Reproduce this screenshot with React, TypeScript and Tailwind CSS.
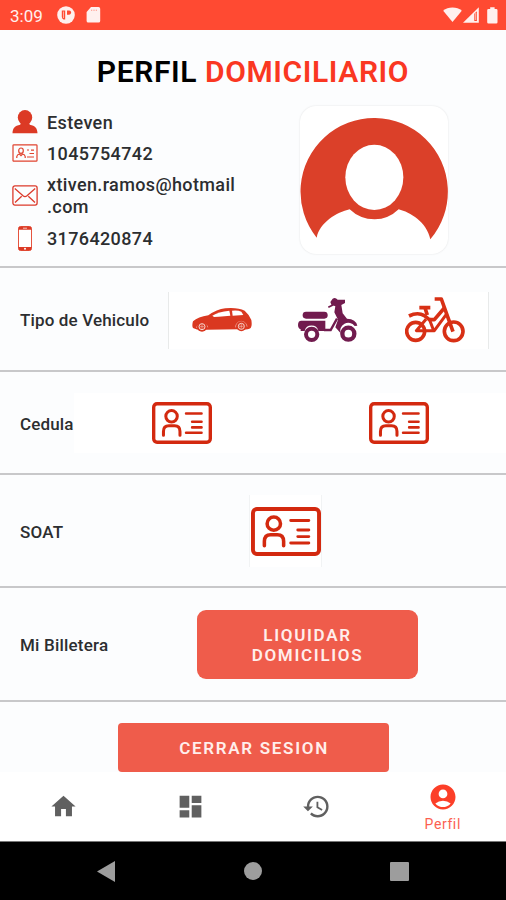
import type { ReactNode } from 'react';
import { MdAccountCircle, MdDashboard, MdHistory, MdHome } from 'react-icons/md';

const StatusBar = () => (
    <header className="h-[30px] shrink-0 bg-[#ff4a32] flex items-center pl-[10px] pr-[8px] text-[#fff0ee]">
        <span className="w-[47px] text-[17px] leading-[30px] pt-[1px]">3:09</span>
        <svg width="18" height="18" viewBox="0 0 18 18" fill="currentColor">
            <circle cx="9" cy="9" r="8.8" />
            <path d="M8.2 4.5v9H6.6q-1.8-.8-1.8-2.8V4.5z" fill="#ff4a32" />
            <path d="M10 4.5h2.2q1.9.2 1.9 2.1T12.2 8.800H10z" fill="#ff4a32" />
            <path d="M6.500 5.500v6.500" stroke="currentColor" strokeWidth="0.600" />
        </svg>
        <svg className="ml-[11px]" width="15" height="16" viewBox="0 0 15 16" fill="currentColor">
            <path d="M5 0h7.500q1.700 0 1.700 1.700v12.200q0 1.700-1.700 1.700H2.200q-1.600 0-1.600-1.700V5z" />
            <path d="M5.700 2.600v1.400M8 2.600v1.400M10.300 2.600v1.400" stroke="#ff4a32" strokeWidth="1" opacity="0.500" />
        </svg>
        <svg className="ml-auto" width="19" height="16" viewBox="0 0 19 16" fill="currentColor">
            <path d="M.2 3.700Q4 .4 9.500.4t9.300 3.300L9.500 15z" />
        </svg>
        <svg className="ml-[1px]" width="16" height="16" viewBox="0 0 16 16" fill="currentColor">
            <path d="M0 15.800 15.800.2v15.600z" />
            <path d="M11.300 6.800v7.200h2.600V4.200z" fill="#ff4a32" />
            <path d="M12.700 6v7" stroke="currentColor" strokeWidth="0.700" />
        </svg>
        <svg className="ml-[8px]" width="11" height="17" viewBox="0 0 11 17" fill="currentColor">
            <path d="M3.200.3h4.400V2h1.600q1.300 0 1.300 1.300v12q0 1.300-1.300 1.300H1.500Q.2 16.600.2 15.300V3.300Q.2 2 1.500 2h1.700z" />
        </svg>
    </header>
);

const UserIcon = () => (
    <svg width="26" height="24" viewBox="0 0 26 24" fill="#dc3a25">
        <ellipse cx="13" cy="7.500" rx="7.200" ry="7.500" />
        <path d="M.5 23.200c.2-5 2.300-7.200 7.700-8.400q0-1.500 2-2.700h5.600q2 1.200 2 2.700c5.400 1.200 7.500 3.400 7.700 8.400z" />
    </svg>
);

const SmallCardIcon = () => (
    <svg width="26" height="18" viewBox="0 0 26 18" fill="none" stroke="#e0432f" strokeWidth="1.200">
        <rect x="1" y="0.800" width="24" height="16.400" rx="0.800" />
        <ellipse cx="9" cy="6.700" rx="2.300" ry="2.700" />
        <path d="M4.800 14v-1.500q.4-2.100 2.600-2.500l1.600 1.700 1.600-1.700q2.300.4 2.600 2.500V14" />
        <path d="M15 6h2M19 6.200h3M17.500 9.500H22M15 13h7" />
    </svg>
);

const MailIcon = () => (
    <svg width="26" height="21" viewBox="0 0 26 21" fill="none" stroke="#dc3a2b" strokeWidth="1.300">
        <rect x="0.900" y="0.900" width="24.200" height="19.200" rx="2" />
        <path d="m2.800 3.600 8.200 7.200q2 1.500 4 0l8.200-7.200M3 17.500l6.700-6.200M23 17.500l-6.700-6.200" />
    </svg>
);

const PhoneIcon = () => (
    <svg width="14" height="25" viewBox="0 0 14 25">
        <rect x="0.500" y="0.500" width="13" height="24" rx="2" fill="#fff" stroke="#e5543f" />
        <path d="M.5 3.700V2.500q0-2 2-2h9q2 0 2 2v1.200zM.5 21v1.500q0 2 2 2h9q2 0 2-2V21z" fill="#dc3a25" />
        <path d="M5 2.200h4" stroke="#fff" strokeWidth="0.700" />
        <circle cx="7" cy="22.700" r="1" fill="#fff" />
    </svg>
);

const Avatar = () => (
    <div className="size-[148px] rounded-[16px] bg-white shadow-[0_0_2px_rgba(0,0,0,0.12)] overflow-hidden">
        <svg width="148" height="148" viewBox="0 0 444 444">
            <path
                d="M50 395A221 221 0 1 1 391 400C380 347 330 319 296 310Q265 340 224 340 180 340 149 310C110 319 60 349 50 395Z"
                fill="#db4029"
            />
            <ellipse cx="223" cy="214" rx="87" ry="98" fill="#fff" />
        </svg>
    </div>
);

const CardIcon = ({ className }: { className: string }) => (
    <svg className={className} viewBox="0 0 178 124" fill="none" stroke="#d3290f" strokeWidth="9" strokeLinecap="round">
        <rect x="5" y="5" width="168" height="114" rx="10" strokeWidth="10" />
        <circle cx="58" cy="42" r="17" />
        <path d="M34 98V87Q34 70 50 70H67Q83 70 83 87V98" />
        <path d="M101 34H147M119 58H147M119 75H147M101 91H147" strokeWidth="7.500" />
    </svg>
);

const CarIcon = () => (
    <svg width="60" height="24" viewBox="0 0 180 72" fill="#da3820">
        <path d="M3 60Q-1 53 3 40Q18 27 49 22Q74 4 100 1Q138-2 158 8Q172 20 178 36Q181 54 176 60Q168 66 138 64L44 65Q18 69 3 60Z" />
        <path d="M61 23Q79 11 112 8L115 23 80 26 66 27Z" fill="#fff" />
        <path d="M120 8Q138 6 148 11L154 21 122 23Z" fill="#fff" />
        <path d="M14 60A17 17 0 0 1 47 58M131 58A17 17 0 0 1 165 56" fill="none" stroke="#f9d6ce" strokeWidth="2" />
        <circle cx="30" cy="56" r="15" />
        <circle cx="148" cy="55" r="15" />
        <g fill="none" stroke="#f9d6ce">
            <circle cx="30" cy="56" r="9" strokeWidth="3" />
            <circle cx="148" cy="55" r="9" strokeWidth="3" />
            <path d="M30 49v14M23 56h14M148 48v14M141 55h14" strokeWidth="1.500" />
        </g>
    </svg>
);

const ScooterIcon = () => (
    <svg width="60" height="44" viewBox="0 0 180 132" fill="#711b4e">
        <rect x="14" y="41" width="75" height="21" rx="10" />
        <path d="M10 68H82V99H61A21 21 0 0 0 20 99H8V94Q0 91 0 81Q0 68 10 68Z" />
        <path d="M78 96H98L117 62" fill="none" stroke="#711b4e" strokeWidth="7" />
        <circle cx="41" cy="109" r="17" fill="none" stroke="#711b4e" strokeWidth="12" />
        <circle cx="151" cy="107" r="18" fill="none" stroke="#711b4e" strokeWidth="13" />
        <path d="M97 12 104 2Q112-3 119 5H141V15L130 21 134 46 147 62Q174 63 178 83L170 84A24 24 0 0 0 128 106L112 88 120 65 109 43 112 25 100 20Z" />
        <path d="M91 28 106 20" stroke="#711b4e" strokeWidth="5" />
    </svg>
);

const BikeIcon = () => (
    <svg width="60" height="46" viewBox="0 0 180 138" fill="none" stroke="#d83015" strokeWidth="11" strokeLinejoin="round">
        <circle cx="32" cy="103" r="27" />
        <circle cx="146" cy="103" r="28" />
        <path d="M89 6H109L144 104" />
        <path d="M43 32H76M60 33 67 54" />
        <path d="M12 57Q38 44 58 56L73 68H88L118 33" />
        <path d="M72 64 85 98M63 67 34 101H88L124 52" strokeWidth="9" />
    </svg>
);

const contactRows: { icon: ReactNode; text: string; className: string }[] = [
    { icon: <UserIcon />, text: 'Esteven', className: 'h-[28px]' },
    { icon: <SmallCardIcon />, text: '1045754742', className: 'h-[34px]' },
    { icon: <MailIcon />, text: 'xtiven.ramos@hotmail .com', className: 'h-[50px]' },
    { icon: <PhoneIcon />, text: '3176420874', className: 'h-[36px]' },
];

const navItems = [
    { Icon: MdHome, label: 'Inicio' },
    { Icon: MdDashboard, label: 'Servicios' },
    { Icon: MdHistory, label: 'Historial' },
];

const App = () => {
    return (
        <div className="w-[506px] h-[900px] flex flex-col bg-[#fcfdfe] text-[#2c2e30] overflow-hidden font-['Roboto','Noto_Sans',sans-serif]">
            <StatusBar />

            <main className="h-[742px] shrink-0 flex flex-col">
                {/* Profile data */}
                <section className="h-[238px] shrink-0 border-b-2 border-[#c8c8ca]">
                    <h1 className="h-[76px] pt-[24px] text-center text-[30px] leading-[36px] font-semibold tracking-[0.600px] text-black">
                        PERFIL <span className="text-[#fa3722]">DOMICILIARIO</span>
                    </h1>
                    <div className="flex">
                        <ul className="w-[300px] pt-[2px] pl-[12px]">
                            {contactRows.map((row) => (
                                <li key={row.text} className={`flex items-center ${row.className}`}>
                                    <span className="w-[26px] flex justify-center">{row.icon}</span>
                                    <span className="ml-[9px] pt-px w-[196px] text-[18px] leading-[22px] font-medium tracking-[0.370px]">{row.text}</span>
                                </li>
                            ))}
                        </ul>
                        <Avatar />
                    </div>
                </section>

                {/* Vehicle type */}
                <section className="h-[104px] shrink-0 border-b-2 border-[#c8c8ca] flex items-center pt-[2px]">
                    <h2 className="w-[168px] pl-[20px] pt-[2px] text-[17px] font-medium tracking-[0.150px] whitespace-nowrap">Tipo de Vehiculo</h2>
                    <div className="w-[321px] h-[57px] grid grid-cols-3 items-center justify-items-center bg-white border-x border-[#e8eaea]">
                        <CarIcon />
                        <ScooterIcon />
                        <BikeIcon />
                    </div>
                </section>

                {/* Identity card, both sides */}
                <section className="h-[103px] shrink-0 border-b-2 border-[#c8c8ca] flex items-center">
                    <h2 className="w-[74px] pl-[20px] pt-[4px] text-[17px] font-medium tracking-[0.150px]">Cedula</h2>
                    <div className="flex-1 h-[60px] flex items-center bg-white pl-[78px]">
                        <CardIcon className="w-[60px] h-[42px]" />
                        <CardIcon className="w-[60px] h-[42px] ml-[157px]" />
                    </div>
                </section>

                <section className="h-[113px] shrink-0 border-b-2 border-[#c8c8ca] flex items-center">
                    <h2 className="w-[249px] pl-[20px] pt-[5px] text-[17px] font-medium tracking-[0.250px]">SOAT</h2>
                    <div className="w-[73px] h-[72px] flex items-center justify-center bg-white border-x border-[#f1f3f4]">
                        <CardIcon className="w-[70px] h-[49px] mt-[2px]" />
                    </div>
                </section>

                {/* Wallet */}
                <section className="h-[114px] shrink-0 border-b-2 border-[#c8c8ca] flex items-center">
                    <h2 className="w-[197px] pl-[20px] pt-[4px] text-[17px] font-medium tracking-[0.200px]">Mi Billetera</h2>
                    <button className="w-[221px] h-[69px] pt-[2px] rounded-[9px] bg-[#ef5c4b] text-[#ffeeeb] text-[17px] leading-[20px] font-semibold tracking-[1.700px]">
                        LIQUIDAR
                        <br />
                        DOMICILIOS
                    </button>
                </section>

                <section className="pt-[21px] flex justify-center">
                    <button className="w-[271px] h-[49px] pt-[2px] pl-[2px] rounded-[4px] bg-[#ef5c4b] text-[#ffeeeb] text-[17px] font-semibold tracking-[1.700px]">
                        CERRAR SESION
                    </button>
                </section>
            </main>

            <nav className="h-[70px] shrink-0 grid grid-cols-4 bg-white border-b border-[#777]">
                {navItems.map(({ Icon, label }) => (
                    <button key={label} aria-label={label} className="flex items-center justify-center pl-px text-[#606060]">
                        <Icon size={29} />
                    </button>
                ))}
                <button className="flex flex-col items-center pt-[10px] text-[#fc3f28]">
                    <MdAccountCircle size={30} />
                    <span className="text-[14px] leading-[24px] tracking-[0.600px] text-[#fc5f50]">Perfil</span>
                </button>
            </nav>

            {/* System navigation */}
            <footer className="flex-1 bg-black flex items-center justify-between pl-[97px] pr-[97px]">
                <svg width="18" height="21" viewBox="0 0 18 21" fill="#9d9d9d">
                    <path d="M0 10.500 18 0v21z" />
                </svg>
                <span className="size-[18px] rounded-full bg-[#9d9d9d]" />
                <span className="size-[19px] rounded-[1px] bg-[#9d9d9d]" />
            </footer>
        </div>
    );
};

export default App;
